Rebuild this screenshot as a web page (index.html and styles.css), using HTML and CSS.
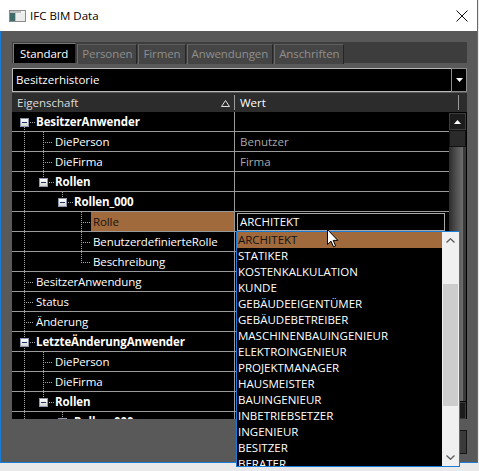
FILE: index.html
```html
<!DOCTYPE html>
<html lang="de">
<head>
<meta charset="utf-8">
<title>IFC BIM Data</title>
<link rel="stylesheet" href="styles.css">
</head>
<body>
<div class="window">
  <div class="titlebar">
    <svg class="app-icon" width="17" height="12" viewBox="0 0 17 12">
      <rect x="0.5" y="0.5" width="16" height="11" fill="#bdbdbd" stroke="#8a8a8a"/>
      <rect x="1" y="3" width="5" height="8" fill="#3f6b6b"/>
      <rect x="7" y="3" width="9" height="8" fill="#ececec"/>
      <rect x="12" y="1" width="4" height="2" fill="#f4f4f4"/>
    </svg>
    <span class="title">IFC BIM Data</span>
    <svg class="close" width="12" height="12" viewBox="0 0 12 12">
      <path d="M0.5 0.5 L11.5 11.5 M11.5 0.5 L0.5 11.5" stroke="#111" stroke-width="1"/>
    </svg>
  </div>
  <div class="client">
    <div class="tabstrip">
      <div class="tab active">Standard</div>
      <div class="tab">Personen</div>
      <div class="tab">Firmen</div>
      <div class="tab">Anwendungen</div>
      <div class="tab">Anschriften</div>
    </div>
    <div class="combo">
      <span class="combo-text">Besitzerhistorie</span>
      <span class="combo-btn"><svg width="7" height="4" viewBox="0 0 7 4"><path d="M0 0 H7 L3.5 4 Z" fill="#fff"/></svg></span>
    </div>
    <div class="grid">
      <div class="grid-head">
        <div class="hcell hname"><span>Eigenschaft</span><svg class="sort" width="9" height="7" viewBox="0 0 9 7"><path d="M4.5 0.5 L8.5 6.5 H0.5 Z" fill="none" stroke="#e0e0e0"/></svg></div>
        <div class="hcell hval">Wert</div>
        <div class="hcell hrest"></div>
      </div>
      <div class="grid-body">
        <div class="rows">
          <div class="row">
            <div class="name"><span class="g box-first"><i class="box"></i></span><b>BesitzerAnwender</b></div>
            <div class="val"></div>
          </div>
          <div class="row">
            <div class="name"><span class="g v"></span><span class="g leaf"></span><span>DiePerson</span></div>
            <div class="val dim">Benutzer</div>
          </div>
          <div class="row">
            <div class="name"><span class="g v"></span><span class="g leaf"></span><span>DieFirma</span></div>
            <div class="val dim">Firma</div>
          </div>
          <div class="row">
            <div class="name"><span class="g v"></span><span class="g box-last"><i class="box"></i></span><b>Rollen</b></div>
            <div class="val"></div>
          </div>
          <div class="row">
            <div class="name"><span class="g v"></span><span class="g"></span><span class="g box-last"><i class="box"></i></span><b>Rollen_000</b></div>
            <div class="val"></div>
          </div>
          <div class="row">
            <div class="name"><span class="g v"></span><span class="g"></span><span class="g"></span><span class="g leaf"></span><span class="sel">Rolle</span></div>
            <div class="val"><div class="edit">ARCHITEKT</div></div>
          </div>
          <div class="row">
            <div class="name"><span class="g v"></span><span class="g"></span><span class="g"></span><span class="g leaf"></span><span>BenutzerdefinierteRolle</span></div>
            <div class="val"></div>
          </div>
          <div class="row">
            <div class="name"><span class="g v"></span><span class="g"></span><span class="g"></span><span class="g leaf-last"></span><span>Beschreibung</span></div>
            <div class="val"></div>
          </div>
          <div class="row">
            <div class="name"><span class="g leaf"></span><span>BesitzerAnwendung</span></div>
            <div class="val"></div>
          </div>
          <div class="row">
            <div class="name"><span class="g leaf"></span><span>Status</span></div>
            <div class="val"></div>
          </div>
          <div class="row">
            <div class="name"><span class="g leaf"></span><span>Änderung</span></div>
            <div class="val"></div>
          </div>
          <div class="row">
            <div class="name"><span class="g box-mid"><i class="box"></i></span><b>LetzteÄnderungAnwender</b></div>
            <div class="val"></div>
          </div>
          <div class="row">
            <div class="name"><span class="g v"></span><span class="g leaf"></span><span>DiePerson</span></div>
            <div class="val"></div>
          </div>
          <div class="row">
            <div class="name"><span class="g v"></span><span class="g leaf"></span><span>DieFirma</span></div>
            <div class="val"></div>
          </div>
          <div class="row">
            <div class="name"><span class="g v"></span><span class="g box-last"><i class="box"></i></span><b>Rollen</b></div>
            <div class="val"></div>
          </div>
          <div class="row">
            <div class="name"><span class="g v"></span><span class="g"></span><span class="g box-last"><i class="box"></i></span><b>Rollen_000</b></div>
            <div class="val"></div>
          </div>
        </div>
        <div class="vscroll">
          <div class="sb-btn"><svg width="7" height="4" viewBox="0 0 7 4"><path d="M0 4 H7 L3.5 0 Z" fill="#fff"/></svg></div>
          <div class="sb-thumb"></div>
          <div class="sb-track"></div>
          <div class="sb-btn"></div>
        </div>
      </div>
    </div>
    <div class="footer">
      <div class="button"></div>
    </div>
  </div>
</div>

<div class="dropdown">
  <ul class="list">
    <li class="hl">ARCHITEKT</li>
    <li>STATIKER</li>
    <li>KOSTENKALKULATION</li>
    <li>KUNDE</li>
    <li>GEBÄUDEEIGENTÜMER</li>
    <li>GEBÄUDEBETREIBER</li>
    <li>MASCHINENBAUINGENIEUR</li>
    <li>ELEKTROINGENIEUR</li>
    <li>PROJEKTMANAGER</li>
    <li>HAUSMEISTER</li>
    <li>BAUINGENIEUR</li>
    <li>INBETRIEBSETZER</li>
    <li>INGENIEUR</li>
    <li>BESITZER</li>
    <li>BERATER</li>
  </ul>
  <div class="dd-scroll">
    <div class="dd-arrow"><svg width="9" height="5" viewBox="0 0 9 5"><path d="M0.5 4.5 L4.5 0.8 L8.5 4.5" fill="none" stroke="#606060" stroke-width="1.4"/></svg></div>
    <div class="dd-track"><div class="dd-thumb"></div></div>
    <div class="dd-arrow"><svg width="9" height="5" viewBox="0 0 9 5"><path d="M0.5 0.5 L4.5 4.2 L8.5 0.5" fill="none" stroke="#606060" stroke-width="1.4"/></svg></div>
  </div>
</div>

<svg class="cursor" width="12" height="19" viewBox="0 0 12 19">
  <path d="M0.5 0.5 L0.5 15.5 L4 12.2 L6.5 17.8 L8.6 16.9 L6.2 11.4 L10.8 11.4 Z" fill="#fff" stroke="#000" stroke-width="1" stroke-linejoin="round"/>
</svg>
</body>
</html>
```

FILE: styles.css
```css
* { box-sizing: border-box; }
html, body { margin: 0; padding: 0; }
body {
  width: 479px;
  height: 471px;
  overflow: hidden;
  position: relative;
  background: #e9e9e9;
  font-family: "Open Sans", "Noto Sans", sans-serif;
  font-size: 11.5px;
  color: #fff;
}

.window {
  width: 478px;
  height: 463px;
  display: flex;
  flex-direction: column;
  border-right: 1px solid #1a7cd3;
  background: #fff;
}

.titlebar {
  height: 31px;
  flex: none;
  display: flex;
  align-items: center;
  padding-left: 9px;
  padding-right: 9px;
  background: #fff;
  color: #000;
}
.app-icon { flex: none; margin-top: 1px; }
.title { margin-left: 4px; font-size: 11.5px; flex: 1; }
.close { flex: none; }

.client {
  flex: 1;
  background: #595959;
  border-left: 1px solid #1a7cd3;
  border-bottom: 1px solid #1a7cd3;
  padding: 11px 10px 0 11px;
  display: flex;
  flex-direction: column;
}

.tabstrip {
  height: 21px;
  flex: none;
  background: #3d3d3d;
  display: flex;
  padding: 1px 0 0 1px;
}
.tab {
  height: 20px;
  padding: 0 4px 0 4px;
  margin-top: 1px;
  margin-right: 1px;
  background: #454545;
  border-left: 1px solid #6a6a6a;
  border-top: 1px solid #5e5e5e;
  border-right: 1px solid #262626;
  color: #8e8e8e;
  line-height: 18px;
  letter-spacing: -0.1px;
}
.tab.active {
  margin-top: 0;
  background: #000;
  color: #fff;
  padding: 0 7px 0 6px;
  border-left-color: #7a7a7a;
  border-top-color: #7a7a7a;
  border-right-color: #333;
  line-height: 20px;
}

.combo {
  margin-top: 5px;
  height: 24px;
  flex: none;
  border: 1px solid #b8b8b8;
  background: #000;
  display: flex;
  align-items: stretch;
}
.combo-text { flex: 1; padding-left: 3px; line-height: 22px; }
.combo-btn {
  width: 16px;
  border: 1px solid #8e8e8e;
  margin: -1px -1px -1px 0;
  display: flex;
  align-items: center;
  justify-content: center;
}

.grid {
  margin-top: 1px;
  height: 326px;
  flex: none;
  display: flex;
  flex-direction: column;
  background: #000;
}
.grid-head {
  height: 19px;
  flex: none;
  display: flex;
  background: #2c2c2c;
  color: #dcdcdc;
}
.hname {
  width: 223px;
  padding-left: 5px;
  padding-right: 4px;
  display: flex;
  align-items: center;
  justify-content: space-between;
  border-right: 1px solid #9a9a9a;
  margin: 2px 0;
  line-height: 14px;
}
.sort { margin-top: 1px; }
.hval {
  width: 224px;
  padding-left: 5px;
  color: #fff;
  border-right: 1px solid #9a9a9a;
  margin: 2px 0;
  line-height: 15px;
}
.hrest { flex: 1; }

.grid-body {
  flex: 1;
  display: flex;
  min-height: 0;
}
.rows {
  width: 437px;
  overflow: hidden;
}
.row {
  height: 20px;
  display: flex;
  border-bottom: 1px solid #9a9a9a;
}
.name {
  width: 222px;
  flex: none;
  display: flex;
  align-items: center;
  padding-left: 5px;
  white-space: nowrap;
  overflow: hidden;
  line-height: 19px;
  letter-spacing: -0.1px;
}
.name b { font-weight: 700; }
.val {
  flex: 1;
  border-left: 1px solid #9a9a9a;
  padding-left: 5px;
  line-height: 19px;
  white-space: nowrap;
}
.val.dim { color: #a8a8a8; }

.sel {
  align-self: stretch;
  flex: 1;
  margin-left: -2px;
  padding-left: 2px;
  background: #a06a3c;
  color: #141414;
}

.edit {
  margin: 1px 4px 0 -3px;
  height: 18px;
  border: 1px solid #a8a8a8;
  background: #000;
  padding-left: 2px;
  line-height: 16px;
}

/* tree guides */
.g {
  width: 19px;
  height: 19px;
  flex: none;
  display: flex;
  align-items: flex-start;
  background-repeat: no-repeat;
  --dv: repeating-linear-gradient(180deg, #a8a8a8 0 1px, transparent 1px 2px);
  --dh: repeating-linear-gradient(90deg, #a8a8a8 0 1px, transparent 1px 2px);
}
.g.v {
  background-image: var(--dv);
  background-size: 1px 100%;
  background-position: 7px 0;
}
.g.leaf {
  background-image: var(--dv), var(--dh);
  background-size: 1px 100%, 8px 1px;
  background-position: 7px 0, 9px 10px;
}
.g.leaf-last {
  background-image: var(--dv), var(--dh);
  background-size: 1px 11px, 8px 1px;
  background-position: 7px 0, 9px 10px;
}
.g.box-first {
  background-image: var(--dv), var(--dh);
  background-size: 1px 5px, 6px 1px;
  background-position: 7px 15px, 13px 10px;
}
.g.box-mid {
  background-image: var(--dv), var(--dh);
  background-size: 1px 100%, 6px 1px;
  background-position: 7px 0, 13px 10px;
}
.g.box-last {
  background-image: var(--dv), var(--dh);
  background-size: 1px 6px, 6px 1px;
  background-position: 7px 0, 13px 10px;
}
.box {
  width: 9px;
  height: 9px;
  margin: 6px 0 0 3px;
  border: 1px solid #8e96ac;
  background: linear-gradient(#ffffff, #d4d4d4);
  display: flex;
  align-items: center;
  justify-content: center;
}
.box::before {
  content: "";
  width: 5px;
  height: 1px;
  background: #1e3460;
}

/* grid scrollbar */
.vscroll {
  width: 17px;
  flex: none;
  display: flex;
  flex-direction: column;
  background: #000;
}
.sb-btn {
  height: 17px;
  flex: none;
  margin-top: 1px;
  background: #1c1c1c;
  border: 1px solid #3c3c3c;
  display: flex;
  align-items: center;
  justify-content: center;
}
.sb-thumb {
  height: 17px;
  flex: none;
  background: #2a2a2a;
  border: 1px solid #111;
}
.sb-track {
  flex: 1;
  background: linear-gradient(90deg, #2c2c2c, #4a4a4a 35%, #6c6c6c 80%, #3a3a3a 82%, #3a3a3a);
}

.footer {
  display: flex;
  justify-content: flex-end;
  margin-top: 11px;
}
.button {
  width: 80px;
  height: 24px;
  background: #3a3a3a;
  border: 1px solid #151515;
}

/* dropdown */
.dropdown {
  position: absolute;
  left: 236px;
  top: 231px;
  width: 224px;
  height: 236px;
  border: 1px solid #1a7cd3;
  background: #000;
  display: flex;
  z-index: 2;
}
.list {
  list-style: none;
  margin: 0;
  padding: 0;
  flex: 1;
  overflow: hidden;
}
.list li {
  height: 16px;
  line-height: 15px;
  padding-left: 1px;
  white-space: nowrap;
}
.list li.hl { background: #a06a3c; color: #141414; }
.dd-scroll {
  width: 17px;
  flex: none;
  background: #f0f0f0;
  display: flex;
  flex-direction: column;
}
.dd-arrow {
  height: 17px;
  flex: none;
  display: flex;
  align-items: center;
  justify-content: center;
}
.dd-track { flex: 1; padding-top: 35px; }
.dd-thumb { height: 122px; margin: 0 1px; background: #cdcdcd; }

.cursor {
  position: absolute;
  left: 327px;
  top: 229px;
  z-index: 3;
}
```
